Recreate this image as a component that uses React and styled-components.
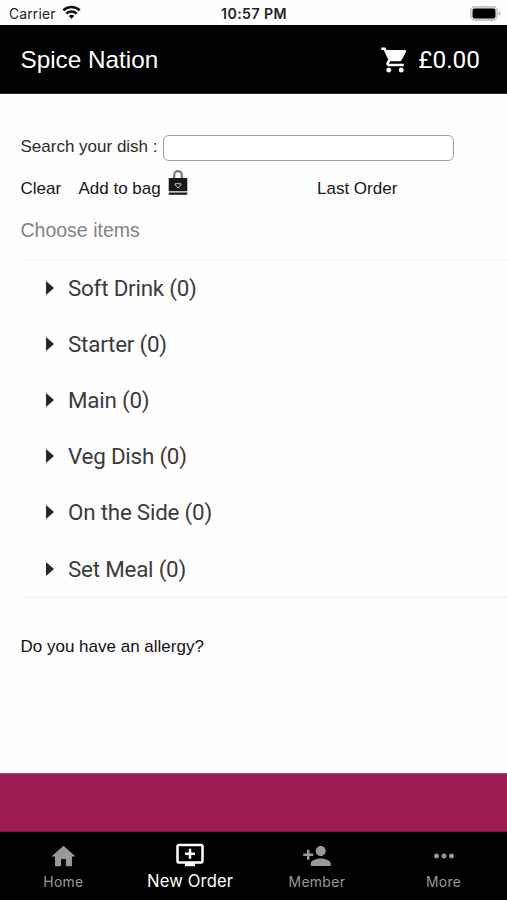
import React from 'react';
import styled, { createGlobalStyle } from 'styled-components';
import { MdShoppingCart, MdHome, MdAddToQueue, MdPersonAdd, MdMoreHoriz } from 'react-icons/md';

const GlobalStyle = createGlobalStyle`
  * { box-sizing: border-box; }
  body { margin: 0; background: #fefefe; }
`;

const Screen = styled.div`
  display: flex;
  flex-direction: column;
  width: 507px;
  height: 900px;
  overflow: hidden;
  background: #fefefe;
  color: #111;
  font-family: "Liberation Sans", Arial, sans-serif;
  white-space: nowrap;
`;

const StatusBar = styled.div`
  display: grid;
  grid-template-columns: 1fr auto 1fr;
  align-items: center;
  height: 25px;
  padding: 2px 6px 0 9px;
  font-family: Inter, sans-serif;
  font-size: 13.8px;
  color: #222;
`;

const Carrier = styled.div`
  display: flex;
  align-items: center;
  gap: 6px;
  letter-spacing: 0.2px;

  svg { margin-top: -2px; }
`;

const Clock = styled.div`
  margin-left: -2px;
  font-weight: 600;
  font-size: 14.2px;
  letter-spacing: 0.4px;
`;

const BatterySlot = styled.div`
  display: flex;
  justify-content: flex-end;

  svg { margin-top: -1px; }
`;

const Header = styled.header`
  display: flex;
  align-items: center;
  justify-content: space-between;
  height: 69px;
  padding: 1px 27px 0 20.5px;
  background: #000;
  border-bottom: 1px solid #333;
  color: #fff;
`;

const Title = styled.h1`
  margin: 0;
  font-size: 24.3px;
  font-weight: 400;
`;

const Cart = styled.div`
  display: flex;
  align-items: center;
  gap: 8px;
  font-family: Roboto, sans-serif;
  font-size: 24.4px;
`;

const Content = styled.main`
  flex: 1;
  padding-top: 41px;
`;

const SearchRow = styled.label`
  display: flex;
  align-items: center;
  height: 26px;
  padding-left: 20.5px;
  font-size: 17px;
  color: #2b2b2b;
`;

const SearchText = styled.span`
  width: 142.5px;
  margin-top: -2px;
`;

const SearchInput = styled.input`
  width: 291px;
  height: 26px;
  padding: 0 8px;
  border: 1.5px solid #a0a0a0;
  border-radius: 6px;
  background: #fff;
  font: inherit;
`;

const Actions = styled.div`
  display: grid;
  grid-template-columns: 58px 238.5px auto;
  align-items: center;
  justify-content: start;
  height: 32px;
  margin-top: 5px;
  padding: 13px 0 0 20.5px;
`;

const Action = styled.button`
  display: flex;
  align-items: center;
  gap: 7px;
  padding: 0;
  border: 0;
  background: none;
  color: #161616;
  font: inherit;
  font-size: 17px;
  height: 20px;

  svg { margin-top: -13px; }
`;

const SectionTitle = styled.h2`
  height: 61px;
  margin: 0;
  padding: 20px 0 0 20.5px;
  font-size: 19.5px;
  font-weight: 400;
  line-height: 24px;
  color: #838383;
`;

const Categories = styled.ul`
  height: 339px;
  margin: 0 0 0 23px;
  padding: 0;
  border-top: 2px solid #f7f7f7;
  border-bottom: 2px solid #f5f5f5;
  list-style: none;
`;

const Category = styled.li`
  display: flex;
  align-items: center;
  gap: 14px;
  height: 56.2px;
  padding: 0 0 3px 23px;
  font-family: Roboto, sans-serif;
  font-size: 22.4px;
  letter-spacing: -0.22px;
  color: #3b3b3b;
`;

const Allergy = styled.p`
  margin: 39px 0 0 20.5px;
  font-size: 17px;
  line-height: 20px;
`;

const Banner = styled.div`
  height: 59px;
  background: #9c1c53;
  border-top: 1px solid #b34877;
  border-bottom: 1px solid #801440;
`;

const TabBar = styled.nav`
  display: grid;
  grid-template-columns: repeat(4, 1fr);
  height: 68px;
  background: #000;
  font-family: Inter, sans-serif;
`;

const Tab = styled.a`
  display: flex;
  flex-direction: column;
  align-items: center;
  padding-top: ${(p) => (p.$active ? 8 : 9)}px;
  color: ${(p) => (p.$active ? '#fff' : '#999')};
`;

const TabIcon = styled.span`
  display: grid;
  place-items: center;
  height: 30px;
`;

const TabLabel = styled.span`
  margin-top: 1px;
  font-size: ${(p) => (p.$active ? 16.6 : 13.9)}px;
  letter-spacing: ${(p) => (p.$active ? 0.15 : 0.35)}px;
  line-height: 20px;
`;

const WifiIcon = () => (
  <svg width="19" height="15" viewBox="0 0 19 15" fill="none" stroke="#111" strokeWidth="2.5">
    <path d="M1.3 5.4C5.9 .9 13.1 .9 17.7 5.4" />
    <path d="M4.3 8.6C7.2 5.8 11.8 5.8 14.7 8.6" />
    <path d="M6.8 11 Q9.5 8.7 12.2 11 L9.5 13.8Z" fill="#111" stroke="none" />
  </svg>
);

const BatteryIcon = () => (
  <svg width="31" height="15" viewBox="0 0 31 15">
    <rect x=".8" y=".8" width="26.4" height="13.4" rx="4" fill="#ddd" stroke="#c4c4c4" strokeWidth="1.4" />
    <rect x="2.6" y="2.5" width="22.8" height="10" rx="2.2" fill="#000" />
    <path d="M28.6 5.2q2 .7 2 2.3t-2 2.3z" fill="#b8b8b8" />
  </svg>
);

const BagIcon = () => (
  <svg width="20" height="26" viewBox="0 0 20 26">
    <path d="M6.2 9V5a3.8 3.8 0 0 1 7.6 0v4" fill="none" stroke="#777" strokeWidth="2.2" />
    <path d="M.7 8h18.6v13.3H.7zM.7 22.6h18.6v2.2H.7z" fill="#18181b" />
    <path d="M10 18 7.2 15v-1.3h5.6V15z" fill="none" stroke="#ccc" strokeWidth="1" />
  </svg>
);

const Caret = () => (
  <svg width="8" height="14" viewBox="0 0 8 14">
    <path d="M0 0 8 7 0 14z" fill="#292929" />
  </svg>
);

const categories = ['Soft Drink', 'Starter', 'Main', 'Veg Dish', 'On the Side', 'Set Meal'];

const tabs = [
  { label: 'Home', Icon: MdHome, size: 29 },
  { label: 'New Order', Icon: MdAddToQueue, size: 30, active: true },
  { label: 'Member', Icon: MdPersonAdd, size: 30 },
  { label: 'More', Icon: MdMoreHoriz, size: 30 },
];

export default function App() {
  return (
    <Screen>
      <GlobalStyle />
      <StatusBar>
        <Carrier>Carrier <WifiIcon /></Carrier>
        <Clock>10:57 PM</Clock>
        <BatterySlot><BatteryIcon /></BatterySlot>
      </StatusBar>
      <Header>
        <Title>Spice Nation</Title>
        <Cart><MdShoppingCart size={30} />£0.00</Cart>
      </Header>
      <Content>
        <SearchRow>
          <SearchText>Search your dish :</SearchText>
          <SearchInput />
        </SearchRow>
        <Actions>
          <Action>Clear</Action>
          <Action>Add to bag <BagIcon /></Action>
          <Action>Last Order</Action>
        </Actions>
        <SectionTitle>Choose items</SectionTitle>
        <Categories>
          {categories.map((name) => (
            <Category key={name}><Caret />{name} (0)</Category>
          ))}
        </Categories>
        <Allergy>Do you have an allergy?</Allergy>
      </Content>
      <Banner />
      <TabBar>
        {tabs.map(({ label, Icon, size, active }) => (
          <Tab key={label} $active={active}>
            <TabIcon><Icon size={size} /></TabIcon>
            <TabLabel $active={active}>{label}</TabLabel>
          </Tab>
        ))}
      </TabBar>
    </Screen>
  );
}
